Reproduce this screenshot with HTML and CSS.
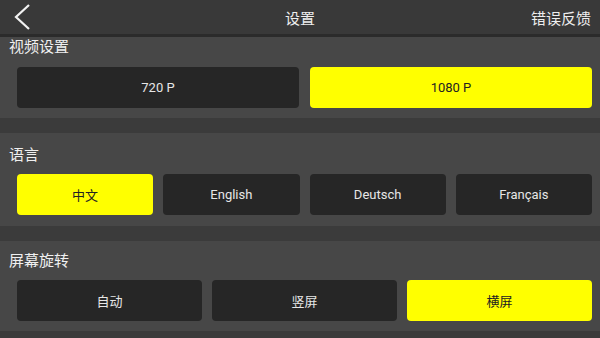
FILE: index.html
```html
<!DOCTYPE html>
<html lang="zh">

<head>
  <meta charset="UTF-8">
  <meta name="viewport" content="width=device-width, initial-scale=1.0">
  <title>设置</title>
  <link rel="stylesheet" href="styles.css">
</head>

<body>
  <div class="header">
    <div class="back">
      <svg width="20" height="30" viewBox="0 0 20 30">
        <polyline points="16,3 3,15 16,27" fill="none" stroke="#f2f2f2" stroke-width="2.2" stroke-linejoin="miter"/>
      </svg>
    </div>
    <div class="title">设置</div>
    <div class="feedback">错误反馈</div>
  </div>

  <div class="section first">
    <div class="section-title">视频设置</div>
    <div class="options two">
      <button>720 P</button>
      <button class="active">1080 P</button>
    </div>
  </div>

  <div class="section">
    <div class="section-title">语言</div>
    <div class="options four">
      <button class="active">中文</button>
      <button>English</button>
      <button>Deutsch</button>
      <button>Français</button>
    </div>
  </div>

  <div class="section last">
    <div class="section-title">屏幕旋转</div>
    <div class="options three">
      <button>自动</button>
      <button>竖屏</button>
      <button class="active">横屏</button>
    </div>
  </div>
</body>

</html>
```

FILE: styles.css
```css
/* settings page */

body {
  margin: 0;
  background-color: #3b3b3b;
  font-family: Roboto, "Noto Sans CJK SC", sans-serif;
  color: #eeeeee;
  width: 600px;
  height: 338px;
  overflow: hidden;
}

.header {
  display: flex;
  align-items: center;
  height: 34px;
  background-color: #393939;
  border-bottom: 3px solid #2b2b2b;
  position: relative;
}

.back {
  display: flex;
  align-items: center;
  padding-left: 13px;
  height: 34px;
}

.title {
  position: absolute;
  left: 0;
  right: 0;
  text-align: center;
  font-size: 15px;
  pointer-events: none;
}

.feedback {
  margin-left: auto;
  padding-right: 9px;
  font-size: 15px;
}

.section {
  background-color: #474747;
  padding: 10px 8px 10px 17px;
  margin-bottom: 15px;
}

.section.first {
  padding-top: 0;
}

.section.first .section-title {
  margin-bottom: 10px;
}

.section.last {
  margin-bottom: 0;
}

.section-title {
  font-size: 15px;
  line-height: 20px;
  margin-left: -8px;
  margin-bottom: 9px;
  color: #f0f0f0;
}

.section + .section {
  padding-top: 12px;
  padding-bottom: 11px;
}

.section.last {
  padding-top: 10px;
  padding-bottom: 10px;
}

.options {
  display: grid;
  gap: 10px;
}

.options.two {
  grid-template-columns: 1fr 1fr;
  column-gap: 11px;
}

.options.three {
  grid-template-columns: 1fr 1fr 1fr;
}

.options.four {
  grid-template-columns: 1fr 1fr 1fr 1fr;
}

.options button {
  height: 41px;
  border: none;
  border-radius: 4px;
  background-color: #262626;
  color: #e6e6e6;
  font-family: Roboto, "Noto Sans CJK SC", sans-serif;
  font-size: 13px;
  cursor: pointer;
}

.options button.active {
  background-color: #ffff00;
  color: #222222;
}
```
